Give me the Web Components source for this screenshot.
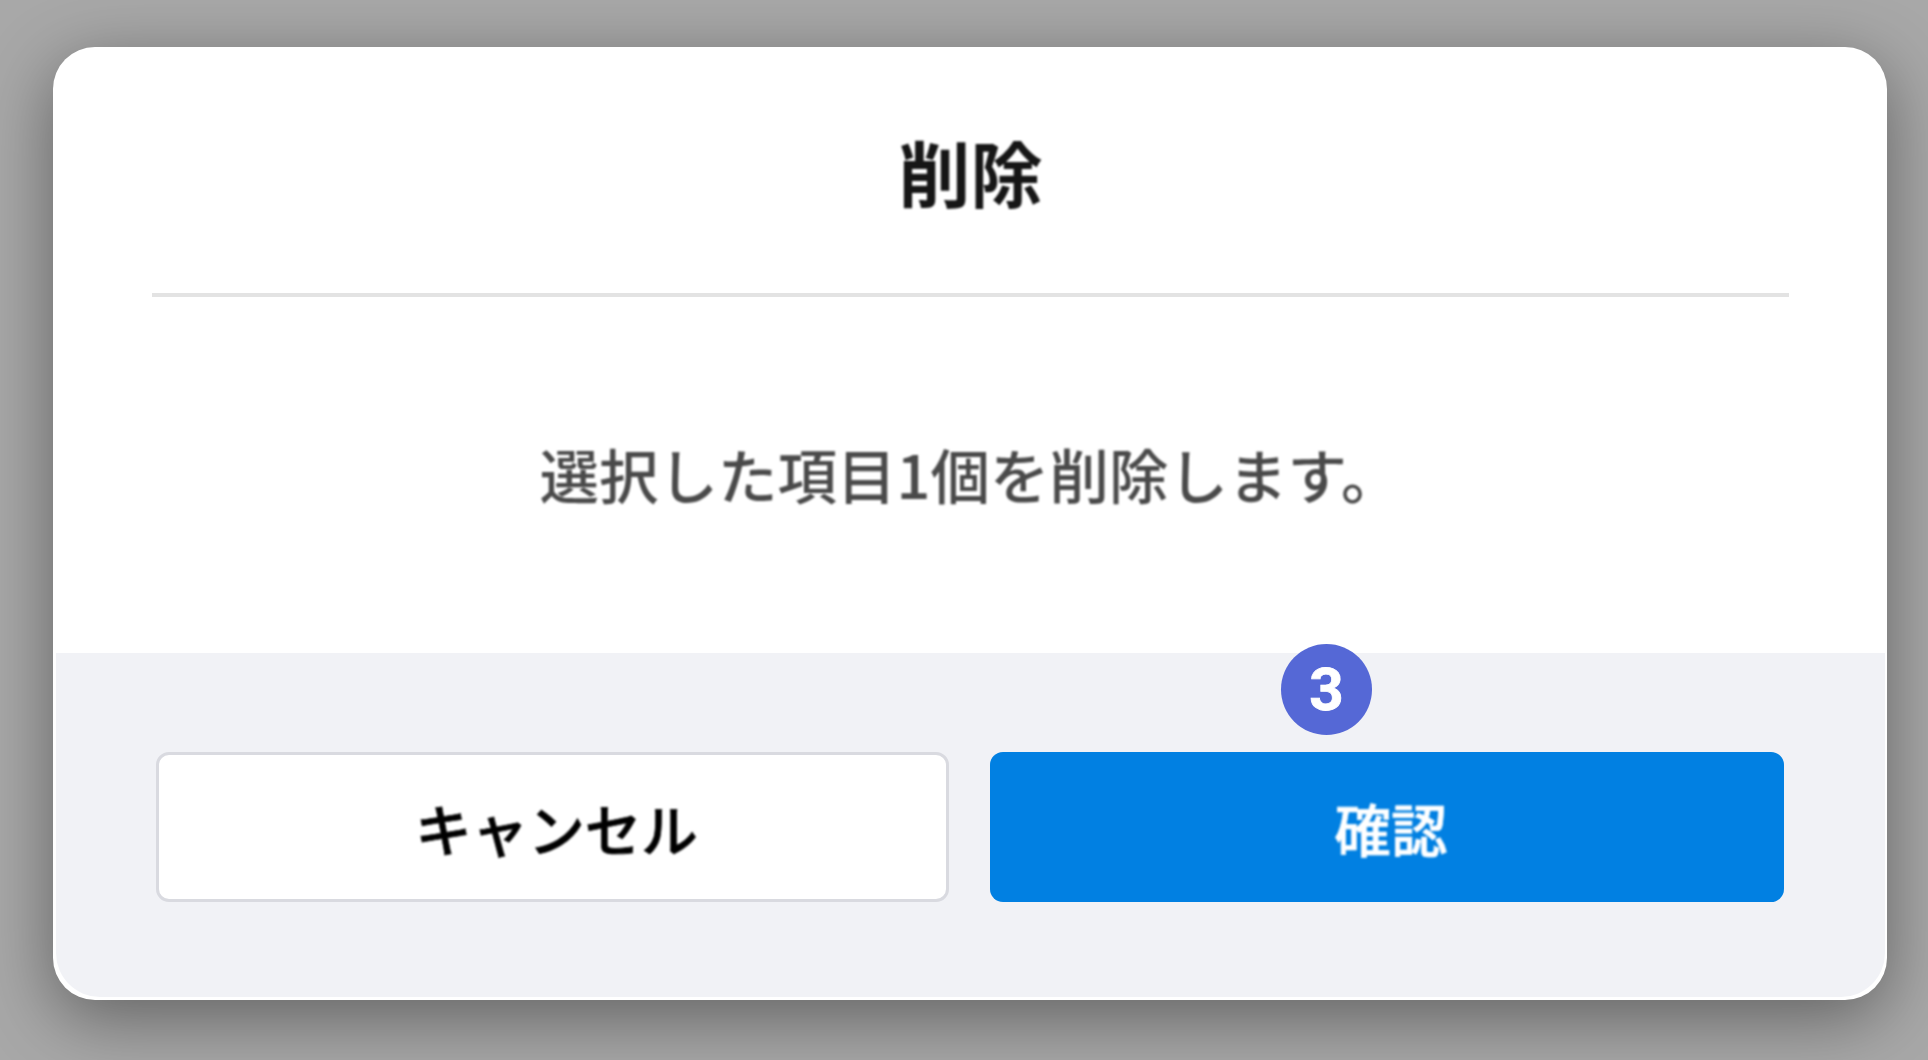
<!DOCTYPE html>
<html lang="ja"><head><meta charset="utf-8">
<style>
html,body{margin:0;padding:0;height:100%;overflow:hidden;background:#a3a3a3}
body{font-family:"Noto Sans CJK JP","Noto Sans",sans-serif}
</style></head><body>
<template id="t-backdrop"><style>
:host{display:block;width:1928px;height:1060px;box-sizing:border-box;padding:47px 41px 60px 53px;background:#a8a8a8;overflow:hidden}
</style><slot></slot></template>
<template id="t-dialog"><style>
:host{display:flex;flex-direction:column;position:relative;height:953px;background:#fff;border-radius:42px;box-shadow:0 18px 70px rgba(0,0,0,.42);overflow:hidden}
header{margin:0 98px 0 99px;height:246px;border-bottom:4px solid #e3e3e3;display:flex;align-items:center;justify-content:center;box-sizing:content-box}
h2{margin:0;font-size:72px;font-weight:700;color:#161616;line-height:1;transform:translateY(1px);filter:blur(1px)}
.body{height:356px;display:flex;align-items:center;justify-content:center;font-size:59.5px;font-weight:500;color:#4a4a4a;filter:blur(1px)}
.body ::slotted(*){transform:translateY(-2px)}
footer{flex:1;background:#f1f2f6;margin:0 2px 3px 3px;border-bottom-left-radius:44px;border-bottom-right-radius:44px;display:grid;grid-template-columns:793px 794px;column-gap:41px;padding:99px 101px 0 100px;align-content:start}
</style><header><h2><slot name="title"></slot></h2></header><div class="body"><slot name="body"></slot></div><footer><slot name="actions"></slot></footer><slot></slot></template>
<template id="t-btn"><style>
:host{display:flex;align-items:center;justify-content:center;box-sizing:border-box;height:150px;border-radius:13px;font-size:56.5px;font-weight:500;-webkit-text-stroke:.7px currentColor}
:host([variant=secondary]){background:#fff;border:3px solid #d9dae0;color:#000}
:host([variant=primary]){background:#0180e2;color:#fff}
span{filter:blur(.9px);transform:translate(4px,0)}
</style><span><slot></slot></span></template>
<template id="t-badge"><style>
:host{position:absolute;left:1228px;top:597px;width:91px;height:91px;border-radius:50%;background:#5568d6;color:#fff;display:flex;align-items:center;justify-content:center;font:700 60px/1 Roboto,"Liberation Sans",sans-serif;-webkit-text-stroke:.8px #fff}
</style><slot></slot></template>
<ui-backdrop>
<ui-dialog>
<span slot="title">削除</span>
<span slot="body" style="display:block">選択した項目1個を削除します。</span>
<ui-button slot="actions" variant="secondary">キャンセル</ui-button>
<ui-button slot="actions" variant="primary">確認</ui-button>
<ui-badge>3</ui-badge>
</ui-dialog>
</ui-backdrop>
<script>
for(const [tag,id] of [["ui-backdrop","t-backdrop"],["ui-dialog","t-dialog"],["ui-button","t-btn"],["ui-badge","t-badge"]]){
customElements.define(tag,class extends HTMLElement{constructor(){super();this.attachShadow({mode:"open"}).appendChild(document.getElementById(id).content.cloneNode(true))}});
}
</script>
</body></html>
